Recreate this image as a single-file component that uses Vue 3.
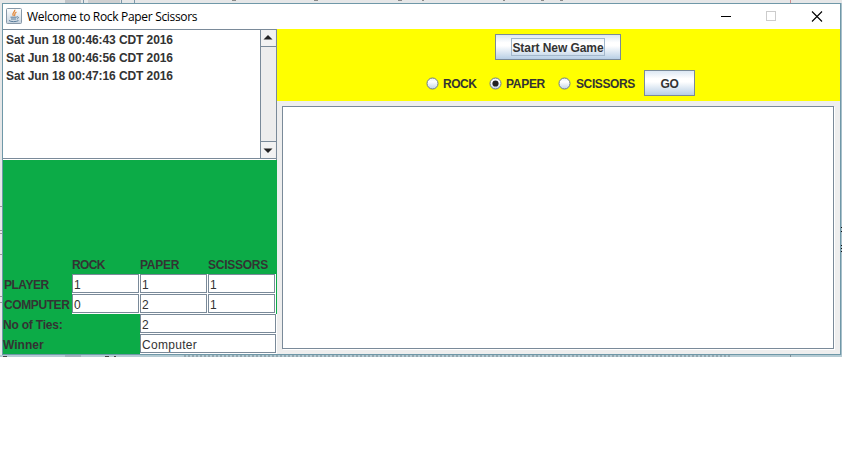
<script setup>
import { ref } from 'vue'
const dates = ['Sat Jun 18 00:46:43 CDT 2016', 'Sat Jun 18 00:46:56 CDT 2016', 'Sat Jun 18 00:47:16 CDT 2016']
const moves = ['ROCK', 'PAPER', 'SCISSORS']
const choice = ref('PAPER')
const scores = [
  { name: 'PLAYER', values: ['1', '1', '1'] },
  { name: 'COMPUTER', values: ['0', '2', '1'] },
]
</script>

<template>
  <div class="desktop">
    <svg class="backdrop" width="842" height="358">
      <rect width="842" height="357" fill="#e6e7e8" />
      <rect x="65" width="16" height="357" fill="#bfc3c7" />
      <path d="M83.500 0V3M121.500 0V3M134.500 0V3" stroke="#7e98aa" />
      <rect x="88" width="32" height="3" fill="#cfd0d1" />
      <path d="M232 .5H236M314 .5H318M398 .5H402M422 .5H424M503 .5H505M541 .5H544M560 .5H563" stroke="#8b8b8b" />
      <path d="M790.500 0V3" stroke="#d08f8f" />
      <path d="M0 206.500H2M0 230.500H2M0 233.500H2M0 254.500H2M0 296.500H2M0 302.500H2" stroke="#999" />
      <rect x="841" y="3" width="1" height="354" fill="#a9c0ca" />
      <path d="M841 227.500H842M841 231.500H842M841 245.500H842M841 248.500H842M841 251.500H842" stroke="#111" />
      <rect x="0" y="355" width="842" height="2" fill="#b5cbd3" />
      <rect x="65" y="355" width="16" height="2" fill="#9fb1ba" />
      <path d="M184 356H730" stroke="#73858e" stroke-dasharray="2 2" />
      <path d="M105 356.500H109M114 356.500H116M3 356.500H7" stroke="#444" />
      <path d="M790.500 355V357" stroke="#7f8f96" />
    </svg>
    <div class="window">
      <header class="titlebar">
        <svg class="java" width="16" height="16" viewBox="0 0 16 16">
          <defs><linearGradient id="ic" x2="0" y2="1"><stop stop-color="#fff" /><stop offset="1" stop-color="#c6d2de" /></linearGradient></defs>
          <rect x=".5" y=".5" width="15" height="15" rx="1" fill="url(#ic)" stroke="#8798a8" />
          <path d="M8.700 1.800C9.500 4 5.200 4.800 7.300 8M10.500 4C7.500 5.300 9.700 6.300 8.300 8" fill="none" stroke="#e3893c" stroke-width="1.300" />
          <path d="M4.500 9.200H10.500M5 11H10M10.500 9C13 8 13 10.500 10.800 11M3 12.500C5 14 10 14 12.500 12.600" fill="none" stroke="#5c7f9d" />
        </svg>
        <span class="title">Welcome to Rock Paper Scissors</span>
        <svg class="controls" width="110" height="12" viewBox="0 0 110 12" fill="none">
          <path d="M0 5.500H10" stroke="#000" />
          <rect x="45.500" y=".5" width="9" height="9" stroke="#ccc" />
          <path d="M91 .5L101 10.500M101 .5L91 10.500" stroke="#000" stroke-width="1.100" />
        </svg>
      </header>
      <main class="content">
        <section class="left">
          <div class="log">
            <div class="list"><div v-for="d in dates" :key="d" class="date">{{ d }}</div></div>
            <div class="scroll">
              <svg class="arrow up" width="14" height="16"><path d="M7 5L11.500 9.500H2.500Z" fill="#222" /></svg>
              <div class="thumb"></div>
              <svg class="arrow down" width="14" height="16"><path d="M7 11L11.500 6.500H2.500Z" fill="#222" /></svg>
            </div>
          </div>
          <div class="stats">
            <div class="row head"><span class="name"></span><span v-for="m in moves" :key="m" class="col" :class="m.toLowerCase()">{{ m }}</span></div>
            <div v-for="s in scores" :key="s.name" class="row">
              <span class="name" :class="s.name.toLowerCase()">{{ s.name }}</span>
              <div v-for="(v, i) in s.values" :key="i" class="cell"><div class="field">{{ v }}</div></div>
            </div>
            <div class="row"><span class="name wide ties">No of Ties:</span><div class="cell big"><div class="field">2</div></div></div>
            <div class="row"><span class="name wide winner">Winner</span><div class="cell big"><div class="field">Computer</div></div></div>
          </div>
        </section>
        <section class="right">
          <div class="game">
            <button class="btn start"><span class="focus">Start New Game</span></button>
            <div class="choices">
              <label v-for="m in moves" :key="m" class="choice" :class="m.toLowerCase()" @click="choice = m">
                <svg width="13" height="13" viewBox="0 0 13 13">
                  <defs><linearGradient :id="'g' + m" x2="0" y2="1"><stop stop-color="#e4edf6" /><stop offset=".35" stop-color="#fff" /><stop offset="1" stop-color="#bfd1e5" /></linearGradient></defs>
                  <circle cx="6.500" cy="6.500" r="5.500" :fill="`url(#g${m})`" stroke="#6c7b89" />
                  <circle v-if="choice === m" cx="6.500" cy="6.500" r="3.100" fill="#222" />
                </svg>
                <span class="caption">{{ m }}</span>
              </label>
              <button class="btn go">GO</button>
            </div>
          </div>
          <div class="output-wrap"><div class="output"></div></div>
        </section>
      </main>
    </div>
  </div>
</template>

<style>
body { margin: 0; background: #fff; overflow: hidden; }
</style>
<style scoped>
* { box-sizing: border-box; }
.desktop { position: relative; width: 842px; height: 460px; padding: 3px 0 0 2px; background: #fff; font: bold 12px "Liberation Sans", Arial, sans-serif; color: #333; white-space: nowrap; }
.backdrop { position: absolute; left: 0; top: 0; }
.window { position: relative; width: 839px; height: 352px; border: 1px solid #6f98a8; background: #eee; }
.titlebar { height: 25px; background: #fff; display: flex; align-items: center; padding-left: 3px; }
.java { margin: -1px 5px 0 0; }
.title { font: 12px "Open Sans", sans-serif; color: #000; letter-spacing: -.32px; flex: 1; }
.controls { margin-right: 9px; }
.content { display: flex; height: 325px; }
.left { width: 274px; }
.log { height: 131px; display: flex; border: 1px solid #7a8a99; border-left: 0; border-bottom: 0; background: #fff; box-shadow: inset 0 -1px #fff, inset 0 -2px #7a8a99; padding-bottom: 2px; }
.list { flex: 1; padding: 1px 0 0 3px; }
.date { height: 18px; line-height: 19px; letter-spacing: -.09px; }
.scroll { width: 16px; border-left: 1px solid #7a8a99; background: #eee; display: flex; flex-direction: column; }
.arrow { background: #f2f2f2; display: block; }
.thumb { flex: 1; border: 1px solid #7a8a99; border-width: 1px 0; background: #ededed; }
.stats { height: 194px; padding-top: 94px; background: #0cab47; }
.row { display: flex; height: 20px; }
.name { width: 69px; line-height: 22px; padding-left: 1px; letter-spacing: -.4px; }
.player { letter-spacing: -.5px; }
.wide { width: 137px; padding-left: 0; letter-spacing: -.2px; }
.winner { letter-spacing: 0; }
.col { width: 68px; line-height: 22px; letter-spacing: -.25px; }
.col.rock { letter-spacing: -.6px; }
.cell { width: 68px; height: 20px; background: #fff; }
.big { width: 137px; }
.field { height: 19px; width: calc(100% - 1px); border: 1px solid #7a8a99; font-weight: normal; line-height: 20px; padding-left: 1px; letter-spacing: .3px; }
.right { flex: 1; display: flex; flex-direction: column; }
.game { height: 72px; background: #ff0; display: flex; flex-direction: column; padding-top: 5px; }
.btn { border: 1px solid #7a8a99; border-radius: 0; margin: 0; padding: 2px 0 0; height: 26px; color: #333; font: inherit; background: linear-gradient(#dde8f3, #fff 32%, #fff 45%, #b8cfe5); }
.start { width: 126px; display: flex; align-items: center; justify-content: center; margin-left: 218px; padding: 0; }
.focus { width: 94px; height: 18px; line-height: 18px; border: 1px solid #a3b8cc; letter-spacing: -.06px; }
.choices { display: flex; align-items: center; margin: 10px 0 0 149px; height: 26px; }
.choice { display: flex; align-items: center; gap: 4px; letter-spacing: -.5px; }
.caption { padding-top: 1px; }
.choice.rock { width: 63px; }
.choice.paper { width: 69px; letter-spacing: -.3px; }
.choice.scissors { width: 86px; gap: 5px; letter-spacing: -.38px; }
.choice svg { flex: none; margin-left: -.5px; margin-right: .5px; }
.go { width: 51px; letter-spacing: -.4px; }
.output-wrap { flex: 1; padding: 5px; }
.output { width: 552px; height: 243px; background: #fff; border: 1px solid #7a8a99; box-shadow: 1px 1px #fff; }
</style>
